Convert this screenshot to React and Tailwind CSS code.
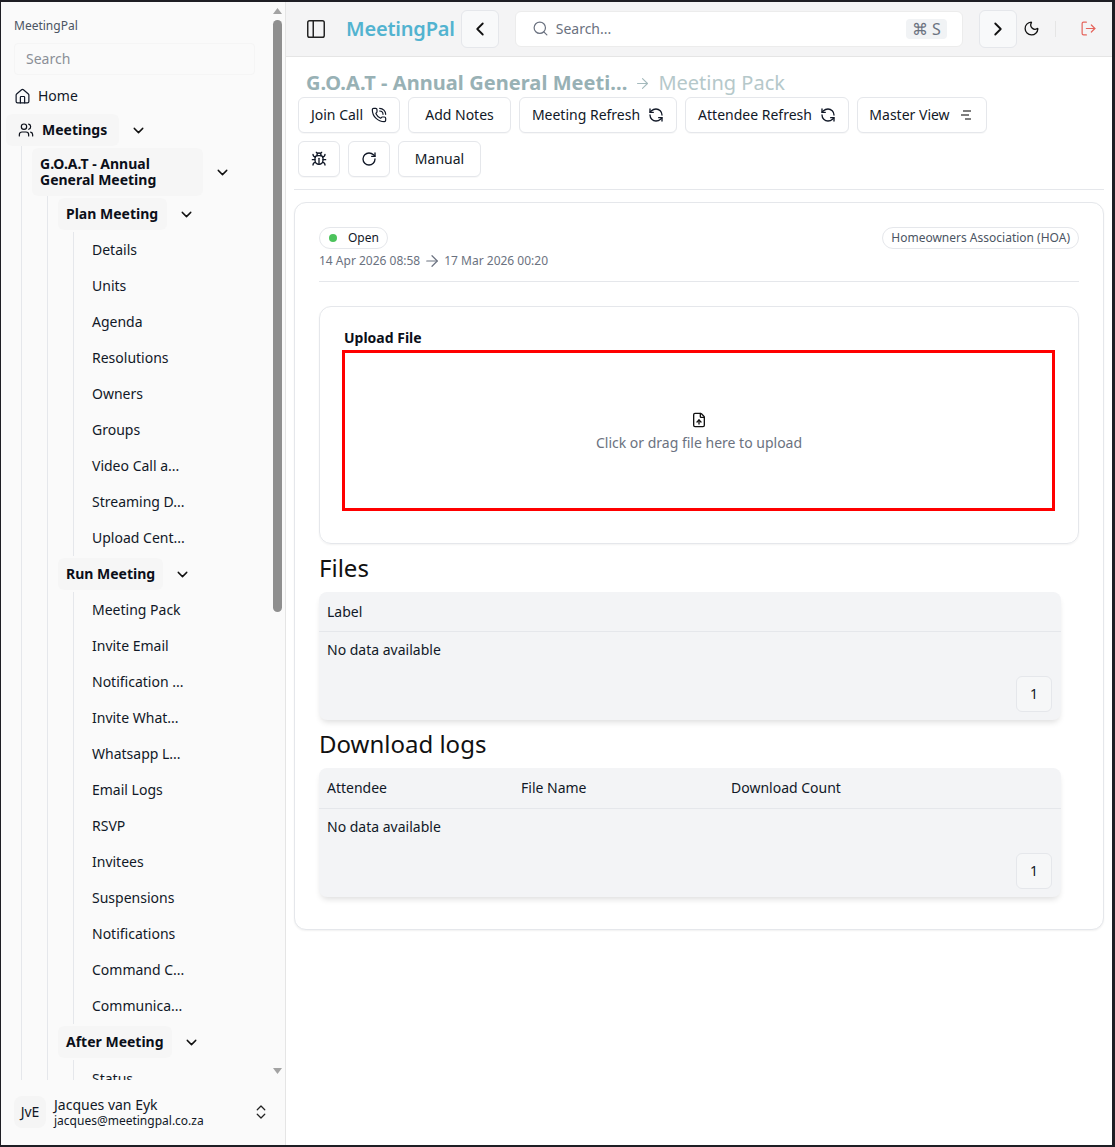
import React from 'react';
import {
  PanelLeft, ChevronLeft, ChevronRight, Search, Moon, LogOut, PhoneCall, RefreshCcw,
  Bug, RotateCw, House, Users, ChevronDown, ChevronsUpDown, ArrowRight, FileUp,
} from 'lucide-react';

const PLAN_ITEMS = ['Details', 'Units', 'Agenda', 'Resolutions', 'Owners', 'Groups', 'Video Call a...', 'Streaming D...', 'Upload Cent...'];
const RUN_ITEMS = ['Meeting Pack', 'Invite Email', 'Notification ...', 'Invite What...', 'Whatsapp L...', 'Email Logs', 'RSVP', 'Invitees', 'Suspensions', 'Notifications', 'Command C...', 'Communica...'];
const AFTER_ITEMS = ['Status'];

const SubItems = ({ items, className = '' }) => (
  <div className={`ml-[15px] border-l border-[#e5e7eb] pl-[18px] ${className}`}>
    {items.map((item) => (
      <div key={item} className="flex h-9 items-center text-sm text-[#111827]">{item}</div>
    ))}
  </div>
);

const SectionHead = ({ label, width }) => (
  <div className="flex h-9 items-center">
    <div className={`flex h-8 items-center rounded-md bg-[#f6f6f6] pl-2 text-sm font-bold text-[#0b0f19] ${width}`}>{label}</div>
    <ChevronDown size={17} strokeWidth={2} className="ml-[11px] text-[#111]" />
  </div>
);

const ToolButton = ({ children, className = '' }) => (
  <button className={`flex h-9 items-center justify-center rounded-md border border-[#e5e7eb] bg-white text-sm text-[#111827] shadow-[0_1px_1px_rgba(0,0,0,0.03)] ${className}`}>
    {children}
  </button>
);

const Pager = () => (
  <div className="flex justify-end pr-[9px]">
    <div className="flex h-9 w-9 items-center justify-center rounded-md border border-[#e5e7eb] bg-[#f6f7f8] text-sm text-[#111827]">1</div>
  </div>
);

// the sidebar's scrollbar, drawn over the nav
const ScrollBar = () => (
  <div className="absolute right-[3px] top-0 bottom-0 w-[9px]">
    <svg width="9" height="6" viewBox="0 0 9 6" className="absolute left-0 top-[6px]"><path d="M4.5 0 9 6H0z" fill="#a3a3a3" /></svg>
    <div className="absolute left-0 top-[18px] h-[592px] w-[9px] rounded-full bg-[#8f8f8f]" />
    <svg width="9" height="6" viewBox="0 0 9 6" className="absolute left-0 top-[1066px]"><path d="M0 0h9L4.5 6z" fill="#a3a3a3" /></svg>
  </div>
);

const Sidebar = () => (
  <aside className="flex w-[285px] shrink-0 flex-col border-r border-[#e5e5e5] bg-[#fafafa]">
    <div className="relative min-h-0 flex-1 overflow-hidden">
      <div className="pl-[13px] pt-[16px] text-xs text-[#4b5563]">MeetingPal</div>
      <div className="ml-[13px] mt-[9px] flex h-[32px] w-[241px] items-center rounded-sm border border-[#f5f5f5] pl-[11px] text-sm text-[#8b8f97]">Search</div>
      <div className="mt-[5px] flex h-8 items-center gap-[7px] pl-[13px] text-sm text-[#111827]">
        <House size={17} strokeWidth={1.7} />
        Home
      </div>
      <div className="mt-[2px] flex h-8 items-center pl-[5px]">
        <div className="flex h-8 w-[113px] items-center gap-2 rounded-md bg-[#f6f6f6] pl-3 text-sm font-bold text-[#0b0f19]">
          <Users size={16} strokeWidth={1.8} />
          Meetings
        </div>
        <ChevronDown size={17} strokeWidth={2} className="ml-[11px] text-[#111]" />
      </div>
      <div className="ml-[20px] border-l border-[#e5e7eb] pl-[10px]">
        <div className="flex items-center pt-[2px]">
          <div className="flex h-[48px] w-[171px] items-center rounded-md bg-[#f6f6f6] pl-2 text-sm font-bold leading-4 text-[#0b0f19]">
            G.O.A.T - Annual<br />General Meeting
          </div>
          <ChevronDown size={17} strokeWidth={2} className="ml-[11px] text-[#111]" />
        </div>
        <div className="ml-[15px] border-l border-[#e5e7eb] pl-[10px]">
          <SectionHead label="Plan Meeting" width="w-[109px]" />
          <SubItems items={PLAN_ITEMS} />
          <SectionHead label="Run Meeting" width="w-[105px]" />
          <SubItems items={RUN_ITEMS} />
          <SectionHead label="After Meeting" width="w-[114px]" />
          <SubItems items={AFTER_ITEMS} className="pt-[1px]" />
        </div>
      </div>
      <ScrollBar />
    </div>
    <div className="flex h-[65px] shrink-0 items-center pb-[1px] pl-[13px] pr-[15px]">
      <div className="flex h-8 w-8 items-center justify-center rounded-lg bg-[#f5f5f5] text-sm text-[#111827]">JvE</div>
      <div className="ml-2 flex-1">
        <div className="text-sm leading-[17px] text-[#111827]">Jacques van Eyk</div>
        <div className="text-xs leading-[15px] text-[#111827]">jacques@meetingpal.co.za</div>
      </div>
      <ChevronsUpDown size={18} strokeWidth={1.7} className="text-[#222]" />
    </div>
  </aside>
);

const TopBar = () => (
  <header className="flex h-[55px] shrink-0 items-center border-b border-[#e5e5e5] bg-[#f4f4f5] pb-[1px]">
    <PanelLeft size={22} strokeWidth={1.6} className="ml-[19px] text-[#222]" />
    <div className="ml-[19px] text-xl font-semibold tracking-[-0.2px] text-[#52b3d0]">MeetingPal</div>
    <button className="ml-[6px] flex h-[38px] w-[38px] items-center justify-center rounded-md border border-[#e5e7eb] bg-[#f8f9fa] text-[#111]">
      <ChevronLeft size={22} strokeWidth={2} />
    </button>
    <div className="ml-[16px] flex h-[36px] w-[448px] items-center rounded-md border border-[#ececec] bg-white pl-[16px] pr-[15px] text-sm text-[#6b7280]">
      <Search size={17} strokeWidth={1.7} />
      <span className="ml-[7px] flex-1">Search...</span>
      <span className="flex h-5 items-center rounded bg-[#f1f3f5] px-[6px] text-base leading-none text-[#6b7280]">⌘ S</span>
    </div>
    <button className="ml-[16px] flex h-[38px] w-[38px] items-center justify-center rounded-md border border-[#e5e7eb] bg-[#f8f9fa] text-[#111]">
      <ChevronRight size={22} strokeWidth={2} />
    </button>
    <Moon size={17} strokeWidth={1.8} className="ml-[6px] text-[#111]" />
    <div className="ml-[15px] h-[16px] w-px bg-[#e5e5e5]" />
    <LogOut size={17} strokeWidth={1.7} className="ml-[24px] text-[#e5645c]" />
  </header>
);

const LinesIcon = () => (
  <svg width="16" height="16" viewBox="0 0 16 16" fill="none" stroke="#555" strokeWidth="1.5">
    <path d="M4 4h8M2 8h8M6 12h6" />
  </svg>
);

const Toolbar = () => (
  <div className="mx-[8px] border-b border-[#e5e7eb] pb-[12px] pl-[4px]">
    <div className="flex gap-2">
      <ToolButton className="w-[102px] gap-2">Join Call <PhoneCall size={16} strokeWidth={1.8} /></ToolButton>
      <ToolButton className="w-[103px]">Add Notes</ToolButton>
      <ToolButton className="w-[158px] gap-2">Meeting Refresh <RefreshCcw size={16} strokeWidth={2} /></ToolButton>
      <ToolButton className="w-[164px] gap-2">Attendee Refresh <RefreshCcw size={16} strokeWidth={2} /></ToolButton>
      <ToolButton className="w-[130px] gap-[9px]">Master View <LinesIcon /></ToolButton>
    </div>
    <div className="mt-2 flex gap-2">
      <ToolButton className="w-[42px]"><Bug size={16} strokeWidth={2} /></ToolButton>
      <ToolButton className="w-[42px]"><RotateCw size={16} strokeWidth={2} /></ToolButton>
      <ToolButton className="w-[83px]">Manual</ToolButton>
    </div>
  </div>
);

const DataCard = ({ columns, headHeight }) => (
  <div className="mr-[18px] rounded-lg bg-[#f3f4f6] pb-[8px] shadow-[0_4px_6px_-2px_rgba(0,0,0,0.14)]">
    <div className={`flex items-center border-b border-[#e5e7eb] pl-2 text-sm text-[#111827] ${headHeight}`}>
      {columns.map((c) => (
        <div key={c.label} className={c.width}>{c.label}</div>
      ))}
    </div>
    <div className="flex h-[36px] items-center pl-2 text-sm text-[#111827]">No data available</div>
    <div className="mt-[8px]"><Pager /></div>
  </div>
);

const Content = () => (
  <div className="mx-[8px] mt-[12px] rounded-xl border border-[#e5e7eb] bg-white px-[24px] pb-[32px] pt-[24px] shadow-[0_1px_2px_rgba(0,0,0,0.06)]">
    <div className="flex items-start justify-between border-b border-[#e5e7eb] pb-[11px]">
      <div>
        <div className="flex h-[22px] w-[69px] items-center rounded-full border border-[#e5e7eb] pl-[9px] text-xs text-[#111827]">
          <span className="h-2 w-2 rounded-full bg-[#4cc35c]" />
          <span className="ml-[11px]">Open</span>
        </div>
        <div className="mt-[3px] flex h-[18px] items-center text-xs text-[#6b7280]">
          14 Apr 2026 08:58
          <ArrowRight size={18} strokeWidth={1.6} className="ml-[3px] mr-[3px]" />
          17 Mar 2026 00:20
        </div>
      </div>
      <div className="flex h-[22px] items-center rounded-full border border-[#e5e7eb] px-[8px] text-xs text-[#4b5563]">Homeowners Association (HOA)</div>
    </div>
    <div className="mt-[24px] rounded-xl border border-[#e5e7eb] px-[24px] pb-[32px] pt-[21px] shadow-[0_1px_2px_rgba(0,0,0,0.05)]">
      <div className="text-sm font-bold leading-[20px] text-[#0b0f19]">Upload File</div>
      <div className="-ml-[2px] -mr-[1px] mt-[2px] flex h-[161px] flex-col items-center justify-center border-[3px] border-[#ff0000] pl-[1px] pt-[3px]">
        <FileUp size={16} strokeWidth={2} className="text-[#111]" />
        <div className="mt-[5px] text-sm text-[#6b7280]">Click or drag file here to upload</div>
      </div>
    </div>
    <h2 className="mt-[7px] text-2xl leading-[34px] text-[#111]">Files</h2>
    <div className="mt-[7px]">
      <DataCard headHeight="h-[40px]" columns={[{ label: 'Label', width: '' }]} />
    </div>
    <h2 className="mt-[7px] text-2xl leading-[34px] text-[#111]">Download logs</h2>
    <div className="mt-[7px]">
      <DataCard headHeight="h-[41px]" columns={[{ label: 'Attendee', width: 'w-[194px]' }, { label: 'File Name', width: 'w-[210px]' }, { label: 'Download Count', width: '' }]} />
    </div>
  </div>
);

export default function App() {
  return (
    <div className="flex h-[1147px] w-[1115px] overflow-hidden border-t-2 border-b-2 border-l border-r-[3px] border-[#1e1e24] bg-white font-['Noto_Sans',sans-serif]">
      <Sidebar />
      <main className="min-w-0 flex-1">
        <TopBar />
        <div className="flex h-[40px] items-end pl-[20px] text-xl leading-[28px]">
          <span className="font-bold tracking-[0.06px] text-[#98b1b5]">G.O.A.T - Annual General Meeti...</span>
          <ArrowRight size={17} strokeWidth={1.6} className="ml-[7px] mr-[7px] mb-[5px] text-[#a5babd]" />
          <span className="text-[#b5c8ca]">Meeting Pack</span>
        </div>
        <Toolbar />
        <Content />
      </main>
    </div>
  );
}
